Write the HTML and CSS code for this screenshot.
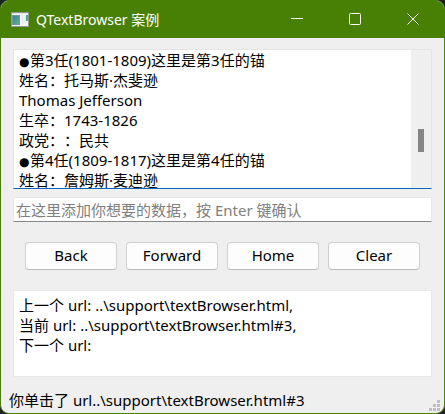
FILE: index.html
```html
<!DOCTYPE html>
<html lang="zh-CN">
<head>
<meta charset="utf-8">
<meta name="viewport" content="width=device-width, initial-scale=1">
<title>QTextBrowser 案例</title>
<link rel="stylesheet" href="styles.css">
</head>
<body>
<div class="window">
  <header class="titlebar">
    <svg class="app-icon" width="18" height="15" viewBox="0 0 18 15" aria-hidden="true">
      <defs>
        <linearGradient id="pane" x1="0" y1="0" x2="1" y2="1">
          <stop offset="0" stop-color="#3f79a8"/>
          <stop offset="1" stop-color="#5fb584"/>
        </linearGradient>
      </defs>
      <rect x="0.5" y="0.5" width="17" height="14" fill="#f4f6f7" stroke="#8f9a92"/>
      <rect x="1" y="1" width="16" height="1" fill="#dfe3e6"/>
      <rect x="1.5" y="3.5" width="7" height="9" fill="url(#pane)" stroke="#6c9a9f"/>
      <rect x="10" y="3" width="5" height="9" fill="#eceff1"/>
      <rect x="15" y="3" width="2" height="6" fill="#4f9f98"/>
    </svg>
    <h1 class="title">QTextBrowser 案例</h1>
    <div class="window-buttons">
      <button class="window-button" type="button" aria-label="最小化">
        <svg width="12" height="12" viewBox="0 0 12 12"><path d="M0 5.5H12"/></svg>
      </button>
      <button class="window-button" type="button" aria-label="最大化">
        <svg width="12" height="12" viewBox="0 0 12 12"><rect x="0.5" y="0.5" width="11" height="11" rx="1"/></svg>
      </button>
      <button class="window-button" type="button" aria-label="关闭">
        <svg width="12" height="12" viewBox="0 0 12 12"><path d="M0.5 0.5L11.5 11.5M11.5 0.5L0.5 11.5"/></svg>
      </button>
    </div>
  </header>
  <main class="content">
    <section class="browser" tabindex="0">
      <div class="browser-text">
        <p><span class="bullet">●</span>第3任(1801-1809)这里是第3任的锚</p>
        <p>姓名：托马斯·杰斐逊</p>
        <p>Thomas Jefferson</p>
        <p>生卒：1743-1826</p>
        <p>政党：：民共</p>
        <p><span class="bullet">●</span>第4任(1809-1817)这里是第4任的锚</p>
        <p>姓名：詹姆斯·麦迪逊</p>
      </div>
      <div class="scrollbar"><div class="thumb"></div></div>
    </section>
    <input class="entry" type="text" aria-label="添加数据" placeholder="在这里添加你想要的数据，按 Enter 键确认">
    <div class="actions">
      <button class="action" type="button">Back</button>
      <button class="action" type="button">Forward</button>
      <button class="action" type="button">Home</button>
      <button class="action" type="button">Clear</button>
    </div>
    <section class="history">
      <p>上一个 url: ..\support\textBrowser.html,</p>
      <p>当前 url: ..\support\textBrowser.html#3,</p>
      <p>下一个 url:</p>
    </section>
  </main>
  <footer class="statusbar">
    <span>你单击了 url..\support\textBrowser.html#3</span>
    <svg class="grip" width="11" height="11" viewBox="0 0 11 11" aria-hidden="true">
      <path d="M8 0h3v3h-3zM4 4h3v3h-3zM8 4h3v3h-3zM0 8h3v3h-3zM4 8h3v3h-3zM8 8h3v3h-3z"/>
    </svg>
  </footer>
</div>
</body>
</html>
```
FILE: styles.css
```css
* {
  box-sizing: border-box;
}

body {
  margin: 0;
  background: #202124;
  color: #000;
  font: 15px/20px "Noto Sans", "Noto Sans CJK SC", sans-serif;
  text-spacing-trim: space-all;
}

p {
  margin: 0;
}

.window {
  display: flex;
  flex-direction: column;
  height: 100vh;
  overflow: hidden;
  border: 1px solid #478005;
  border-radius: 9px;
  background: #efefef;
}

.titlebar {
  display: flex;
  flex: none;
  align-items: center;
  height: 37px;
  padding: 0 2px 0 10px;
  background: #478005;
  color: #fff;
}

.title {
  flex: 1;
  margin: 0 0 0 7px;
  font-size: 14px;
  font-weight: 400;
}

.window-buttons {
  display: flex;
}

.window-button {
  display: flex;
  align-items: center;
  justify-content: center;
  width: 58px;
  height: 36px;
  padding: 0 0 2px;
  border: 0;
  background: none;
}

.window-button svg {
  fill: none;
  stroke: #fff;
}

.content {
  display: flex;
  flex: 1;
  flex-direction: column;
  min-height: 0;
  padding: 11px 12px 0;
}

.browser {
  display: flex;
  flex: 1;
  min-height: 0;
  border: 1px solid #e5e5e5;
  border-bottom-color: #0067c0;
  outline: none;
}

.browser-text {
  flex: 1;
  overflow: hidden;
  padding-left: 5px;
  background: #fff;
}

.bullet {
  display: inline-block;
  width: 11px;
  font: 12px/16px "DejaVu Sans", sans-serif;
}

.scrollbar {
  display: flex;
  flex-direction: column;
  align-items: center;
  justify-content: flex-end;
  width: 20px;
  padding-bottom: 36px;
}

.thumb {
  width: 6px;
  height: 23px;
  background: #868686;
}

.entry {
  width: 100%;
  height: 25px;
  margin-top: 8px;
  padding: 0 2px;
  border: 1px solid #e9e9e9;
  border-bottom-color: #868686;
  border-radius: 0;
  outline: none;
  background: #fff;
  color: #000;
  font: inherit;
}

.entry::placeholder {
  color: #808080;
  opacity: 1;
}

.actions {
  display: flex;
  gap: 9px;
  padding: 20px 12px;
}

.action {
  flex: 1;
  height: 28px;
  padding: 0 0 2px;
  border: 1px solid #d0d0d0;
  border-bottom-color: #bababa;
  border-radius: 4px;
  background: #fdfdfd;
  color: #000;
  font: inherit;
}

.history {
  flex: none;
  height: 87px;
  overflow: hidden;
  padding: 4px 5px;
  border: 1px solid #e9e9e9;
  background: #fff;
}

.statusbar {
  display: flex;
  flex: none;
  align-items: flex-end;
  justify-content: space-between;
  height: 36px;
  padding: 0 4px 2px 8px;
}

.statusbar span {
  padding-bottom: 1px;
}

.grip {
  flex: none;
  fill: #bfbfbf;
}
```
